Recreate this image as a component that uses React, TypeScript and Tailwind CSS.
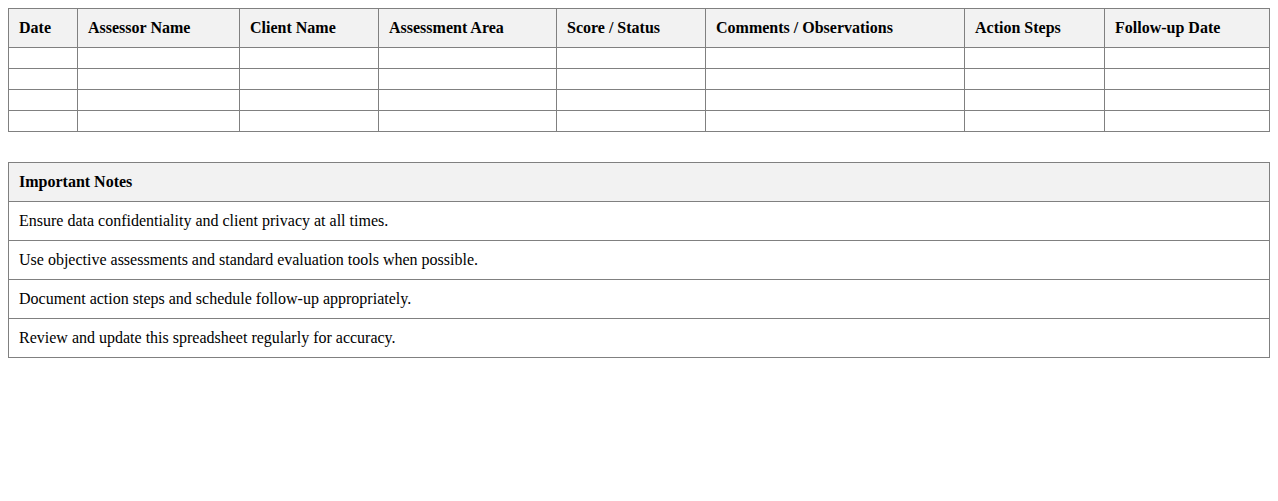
const HEADERS = [
  { label: 'Date', w: 'w-[69px]' },
  { label: 'Assessor Name', w: 'w-[162px]' },
  { label: 'Client Name', w: 'w-[139px]' },
  { label: 'Assessment Area', w: 'w-[178px]' },
  { label: 'Score / Status', w: 'w-[149px]' },
  { label: 'Comments / Observations', w: 'w-[259px]' },
  { label: 'Action Steps', w: 'w-[140px]' },
  { label: 'Follow-up Date', w: 'w-[165px]' },
];

const NOTES = [
  'Ensure data confidentiality and client privacy at all times.',
  'Use objective assessments and standard evaluation tools when possible.',
  'Document action steps and schedule follow-up appropriately.',
  'Review and update this spreadsheet regularly for accuracy.',
];

export default function App() {
  return (
    <div className="m-2 bg-white text-[16px] leading-[normal] text-black font-['Liberation_Serif','Times_New_Roman',serif]">
      {/* Assessment log */}
      <table className="w-full table-fixed border-collapse">
        <thead>
          <tr>
            {HEADERS.map((h) => (
              <th
                key={h.label}
                className={`${h.w} border border-[#808080] bg-[#f2f2f2] p-[10px] text-left font-bold`}
              >
                {h.label}
              </th>
            ))}
          </tr>
        </thead>
        <tbody>
          {[0, 1, 2, 3].map((r) => (
            <tr key={r}>
              {HEADERS.map((h) => (
                <td key={h.label} className="border border-[#808080] p-[10px]"></td>
              ))}
            </tr>
          ))}
        </tbody>
      </table>

      {/* Notes */}
      <table className="mt-[30px] w-full border-collapse">
        <thead>
          <tr>
            <th className="border border-[#808080] bg-[#f2f2f2] p-[10px] text-left font-bold">
              Important Notes
            </th>
          </tr>
        </thead>
        <tbody>
          {NOTES.map((n) => (
            <tr key={n}>
              <td className="border border-[#808080] p-[10px]">{n}</td>
            </tr>
          ))}
        </tbody>
      </table>
    </div>
  );
}
